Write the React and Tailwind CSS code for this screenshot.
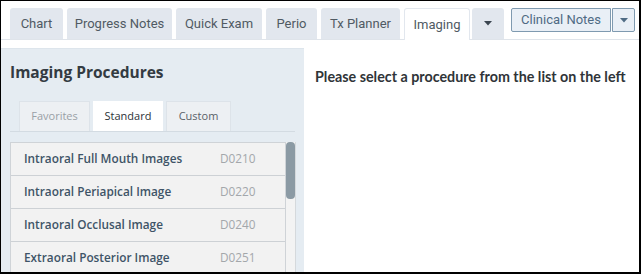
import React from "react";

const tabs = [
  { label: "Chart", w: "w-[53px]" },
  { label: "Progress Notes", w: "w-[105px]" },
  { label: "Quick Exam", w: "w-[86px]" },
  { label: "Perio", w: "w-[51px]" },
  { label: "Tx Planner", w: "w-[79px]" },
];

const rows = [
  ["Intraoral Full Mouth Images", "D0210"],
  ["Intraoral Periapical Image", "D0220"],
  ["Intraoral Occlusal Image", "D0240"],
  ["Extraoral Posterior Image", "D0251"],
];

function Caret({ className = "" }) {
  return (
    <svg width="8" height="5" viewBox="0 0 8 5" className={className}>
      <path d="M0 0 L8 0 L4 4.5 Z" fill="currentColor" />
    </svg>
  );
}

export default function App() {
  return (
    <div className="w-[641px] h-[274px] box-border border-t border-l border-r-2 border-b-2 border-black bg-white overflow-hidden flex flex-col">
      {/* Top tab bar */}
      <div className="shrink-0 flex items-start pl-[9px] pt-[7px] border-b border-[#dfe4ea] h-[39px] box-border font-['Roboto',sans-serif] text-[13px]">
        {tabs.map((t) => (
          <div
            key={t.label}
            className={`${t.w} h-[31px] mr-[4px] rounded-t-[3px] bg-[#e2e7ee] text-[#505a63] flex items-center justify-center`}
          >
            {t.label}
          </div>
        ))}
        <div className="w-[66px] h-[32px] mr-[2px] rounded-t-[3px] bg-white border border-b-0 border-[#e2e7ee] text-[#505a63] flex items-center justify-center">
          Imaging
        </div>
        <div className="w-[32px] h-[31px] rounded-t-[3px] bg-[#e2e7ee] text-[#3b4650] flex items-center justify-center">
          <Caret />
        </div>
        <div className="ml-[7px] flex h-[24px]">
          <div className="w-[100px] h-[24px] box-border border border-[#7f9ab0] rounded-l-[2px] bg-[#e9eff6] text-[#4f6b84] flex items-center justify-center">
            Clinical Notes
          </div>
          <div className="w-[23px] h-[24px] ml-[1px] box-border border border-[#7f9ab0] rounded-r-[2px] bg-[#e9eff6] text-[#4f6b84] flex items-center justify-center">
            <Caret />
          </div>
        </div>
      </div>

      <div className="flex flex-1 pt-[8px] min-h-0">
        {/* Left panel */}
        <div className="w-[303px] bg-[#e5ecf2] border-t border-[#dde5ec] flex flex-col overflow-hidden">
          <div className="shrink-0 pl-[9px] pt-[12px] h-[52px] box-border font-['Open_Sans',sans-serif] font-bold text-[15.5px] text-[#333b42] leading-[22px]">
            Imaging Procedures
          </div>
          <div className="shrink-0 ml-[9px] w-[285px] border-b border-[#d3dbe2] flex pl-[9px] gap-[3px] font-['Open_Sans',sans-serif] text-[11px]">
            <div className="w-[71px] h-[30px] bg-[#edf0f3] border border-b-0 border-[#dde3e9] text-[#9aa0a6] flex items-center justify-center">
              Favorites
            </div>
            <div className="w-[70px] h-[30px] bg-white text-[#2c3237] flex items-center justify-center">
              Standard
            </div>
            <div className="w-[65px] h-[30px] bg-[#edf0f3] border border-b-0 border-[#dde3e9] text-[#5a6168] flex items-center justify-center">
              Custom
            </div>
          </div>
          <div className="shrink-0 ml-[9px] mt-[10px] flex w-[286px]">
            <div className="w-[276px] border-t border-l border-r border-[#cfd3d7]">
              {rows.map(([name, code]) => (
                <div
                  key={code}
                  className="h-[33px] box-border border-b border-[#cdd1d5] bg-[#f2f2f2] flex items-center pl-[13px] font-['Open_Sans',sans-serif] text-[11.8px]"
                >
                  <span className="w-[196px] font-semibold text-[#3e5467]">{name}</span>
                  <span className="text-[#a3a7ab]">{code}</span>
                </div>
              ))}
            </div>
            <div className="w-[10px] bg-[#f3f3f3] border-r border-[#d5d9dc]">
              <div className="w-[9px] h-[57px] rounded-[4px] bg-[#8b9aa4]" />
            </div>
          </div>
        </div>

        {/* Right content */}
        <div className="flex-1 pl-[11px] pt-[18px] font-['Lato',sans-serif] font-bold text-[14.3px] text-[#2f3438]">
          Please select a procedure from the list on the left
        </div>
      </div>
    </div>
  );
}
